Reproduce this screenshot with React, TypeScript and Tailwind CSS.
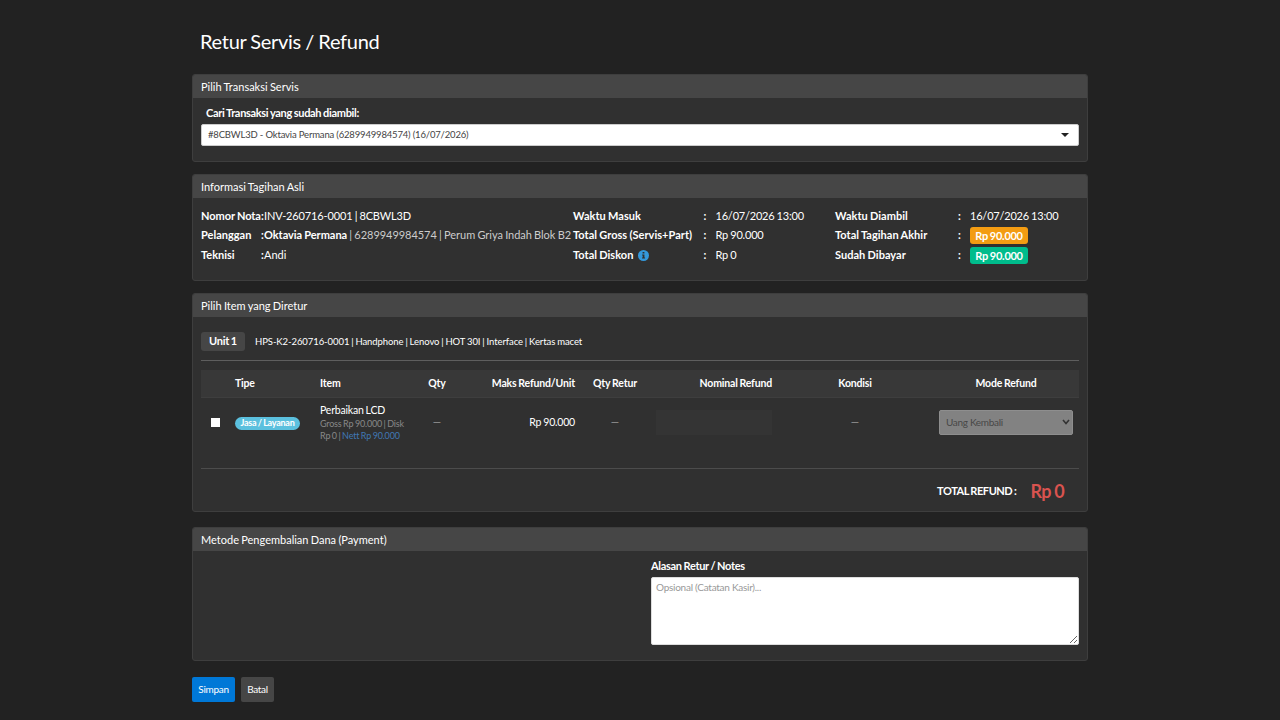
import { useState, type ReactNode } from "react";
import { clsx } from "clsx";

interface Field {
  label: string;
  value: ReactNode;
  info?: boolean;
}

const timeFields: Field[] = [
  { label: "Waktu Masuk", value: "16/07/2026 13:00" },
  { label: "Total Gross (Servis+Part)", value: "Rp 90.000" },
  { label: "Total Diskon", value: "Rp 0", info: true },
];

const billFields: Field[] = [
  { label: "Waktu Diambil", value: "16/07/2026 13:00" },
  { label: "Total Tagihan Akhir", value: <Amount className="bg-[#f39c12]" /> },
  { label: "Sudah Dibayar", value: <Amount className="bg-[#00bc8c]" /> },
];

const tableCols = "grid grid-cols-[28px_85px_103px_40px_124px_68px_129px_154px_148px]";

function Amount({ className }: { className: string }) {
  return (
    <span className={clsx("mt-px block h-[17px] w-[58px] rounded-[3px] text-center text-[11px] leading-[17px] font-bold tracking-[-0.28px] text-white", className)}>
      Rp 90.000
    </span>
  );
}

function Panel({ title, className, children }: { title: string; className?: string; children: ReactNode }) {
  return (
    <section className={clsx("rounded-[3px] border border-[#3e3e3e] bg-[#303030]", className)}>
      <h2 className="h-[23px] rounded-t-[2px] bg-[#464646] px-2 text-[11px] leading-[23px]">{title}</h2>
      {children}
    </section>
  );
}

function InfoIcon() {
  return (
    <svg viewBox="0 0 12 12" className="mt-px ml-[5px] h-[11px] w-[11px]">
      <circle cx="6" cy="6" r="6" fill="#3498db" />
      <path d="M5 2.2h2v1.5H5zM4.5 4.8H7v3.4h.7v1.2H4.4V8.2h.7V6h-.6z" fill="#303030" />
    </svg>
  );
}

function FieldList({ fields, labelWidth }: { fields: Field[]; labelWidth: string }) {
  return (
    <dl>
      {fields.map((f) => (
        <div key={f.label} className="flex h-[19.5px] items-center">
          <dt className={clsx("flex items-center font-bold tracking-[0.03px]", labelWidth)}>
            {f.label}
            {f.info && <InfoIcon />}
          </dt>
          <span className="w-3 font-bold">:</span>
          <dd className="tracking-[-0.2px]">{f.value}</dd>
        </div>
      ))}
    </dl>
  );
}

export default function App() {
  const [checked, setChecked] = useState(false);
  const [notes, setNotes] = useState("");

  return (
    <div className="h-screen overflow-hidden bg-[#222222] font-['Lato',sans-serif] text-[11px] [word-spacing:-0.5px] text-white">
      <div className="mx-auto w-[896px]">
        <h1 className="h-[74px] px-2 pt-[26px] text-[20px] leading-[30px] tracking-[-0.3px]">Retur Servis / Refund</h1>

        {/* Transaction picker */}
        <Panel title="Pilih Transaksi Servis" className="h-[88px]">
          <div className="px-2 pt-[6px]">
            <label className="block h-5 pl-[5px] leading-[17px] font-bold tracking-[-0.32px]">Cari Transaksi yang sudah diambil:</label>
            <button className="flex h-[22px] w-full items-center justify-between rounded-[2px] border border-[#cccccc] bg-white pr-[9px] pl-1.5 text-[9.5px] tracking-[-0.17px] text-[#444444]">
              #8CBWL3D - Oktavia Permana (6289949984574) (16/07/2026)
              <svg viewBox="0 0 8 4" className="mb-px h-1 w-2">
                <path d="M0 0h8L4 4z" fill="#222222" />
              </svg>
            </button>
          </div>
        </Panel>

        {/* Original bill */}
        <Panel title="Informasi Tagihan Asli" className="mt-3 h-[107px]">
          <div className="grid grid-cols-[372px_262px_1fr] px-2 pt-2">
            <dl>
              <div className="flex h-[19.5px] items-center">
                <dt className="w-[60px] shrink-0 font-bold tracking-[-0.05px] whitespace-nowrap">Nomor Nota</dt>
                <span className="w-[3px] shrink-0 font-bold">:</span>
                <dd className="tracking-[-0.14px]">INV-260716-0001 | 8CBWL3D</dd>
              </div>
              <div className="flex h-[19.5px] items-center">
                <dt className="w-[60px] shrink-0 font-bold">Pelanggan</dt>
                <span className="w-[3px] shrink-0 font-bold">:</span>
                <dd className="tracking-[-0.04px] whitespace-nowrap text-[#cccccc]">
                  <b className="text-white">Oktavia Permana</b> | 6289949984574 | Perum Griya Indah Blok B2
                </dd>
              </div>
              <div className="flex h-[19.5px] items-center">
                <dt className="w-[60px] shrink-0 font-bold">Teknisi</dt>
                <span className="w-[3px] shrink-0 font-bold">:</span>
                <dd>Andi</dd>
              </div>
            </dl>
            <FieldList fields={timeFields} labelWidth="w-[130.5px]" />
            <FieldList fields={billFields} labelWidth="w-[123px]" />
          </div>
        </Panel>

        {/* Returned items */}
        <Panel title="Pilih Item yang Diretur" className="mt-3 h-[219px]">
          <div className="px-2 pt-[15px]">
            <div className="flex h-[29px] items-start border-b border-[#5e5e5e]">
              <span className="h-[19px] w-11 rounded-[3px] bg-[#464646] text-center leading-[18px] font-bold tracking-[-0.3px]">Unit 1</span>
              <span className="ml-2.5 text-[9.5px] leading-[19px] tracking-[-0.07px]">
                HPS-K2-260716-0001 | Handphone | Lenovo | HOT 30I | Interface | Kertas macet
              </span>
            </div>

            <div className={clsx(tableCols, "mt-[9px] h-[28px] border-b border-[#3e3e3e] bg-[#383838] text-[10.5px] leading-[26px] font-bold tracking-[-0.17px]")}>
              <span />
              <span className="px-1.5">Tipe</span>
              <span className="px-1.5">Item</span>
              <span className="text-center">Qty</span>
              <span className="px-1.5 text-right">Maks Refund/Unit</span>
              <span className="text-center">Qty Retur</span>
              <span className="px-1.5 text-right">Nominal Refund</span>
              <span className="text-center">Kondisi</span>
              <span className="text-center">Mode Refund</span>
            </div>

            <div className={clsx(tableCols, "h-12 items-center text-[10.5px]")}>
              <input
                type="checkbox"
                checked={checked}
                onChange={(e) => setChecked(e.target.checked)}
                className="mx-auto h-[9px] w-[9px] appearance-none bg-white checked:bg-[#0078d7]"
              />
              <span className="px-1.5">
                <span className="mt-0.5 flex h-[13px] w-[65px] items-center justify-center rounded-full bg-[#5bc0de] text-[9px] font-bold tracking-[-0.25px]">
                  Jasa / Layanan
                </span>
              </span>
              <span className="px-1.5 pt-px">
                <span className="block pb-px leading-[14px] tracking-[-0.2px]">Perbaikan LCD</span>
                <span className="block text-[9px] leading-[12px] tracking-[-0.2px] text-[#888888]">
                  Gross Rp 90.000 | Disk Rp 0 | <span className="text-[#4078b4]">Nett Rp 90.000</span>
                </span>
              </span>
              <span className="pt-px text-center text-[#999999]">—</span>
              <span className="px-1.5 pt-px text-right tracking-[-0.2px]">Rp 90.000</span>
              <span className="pt-px text-center text-[#999999]">—</span>
              <span className="mr-1.5 ml-[7px] h-[25px] bg-[#343434]" />
              <span className="pt-px text-center text-[#999999]">—</span>
              <button disabled className="mx-[7px] flex h-[25px] items-center justify-between rounded-[2px] border border-[#8e8e8e] bg-[#828282] pr-0.5 pl-[6px] text-[10px] tracking-[-0.3px] text-[#474747]">
                Uang Kembali
                <svg viewBox="0 0 8 6" className="h-1.5 w-2">
                  <path d="M1 1l3 3.5L7 1" fill="none" stroke="#333333" strokeWidth="1.6" />
                </svg>
              </button>
            </div>

            <div className="mt-[22px] flex h-[44px] items-center justify-end border-t border-[#4c4c4c] pt-px pr-[15px] font-bold tracking-[-0.45px]">
              TOTAL REFUND :
              <span className="ml-3.5 text-[18px] tracking-[-0.6px] text-[#d9534f]">Rp 0</span>
            </div>
          </div>
        </Panel>

        {/* Payment */}
        <Panel title="Metode Pengembalian Dana (Payment)" className="mt-[15px] h-[134px]">
          <div className="ml-auto w-[436px] pt-[6px] pr-2">
            <label className="block h-5 leading-[17px] font-bold tracking-[-0.32px]">Alasan Retur / Notes</label>
            <textarea
              value={notes}
              onChange={(e) => setNotes(e.target.value)}
              placeholder="Opsional (Catatan Kasir)..."
              className="block h-[68px] w-full rounded-[2px] border border-[#dddddd] bg-white px-1 py-[2px] text-[10px] leading-[15px] tracking-[-0.26px] text-[#444444] placeholder:text-[#999999]"
            />
          </div>
        </Panel>

        <div className="mt-4 flex gap-1.5 text-[10px] tracking-[-0.3px]">
          <button className="h-[25px] w-[43px] rounded-[2px] bg-[#0078d7] pb-px">Simpan</button>
          <button className="h-[25px] w-[33px] rounded-[2px] bg-[#464646] pb-px">Batal</button>
        </div>
      </div>
    </div>
  );
}
